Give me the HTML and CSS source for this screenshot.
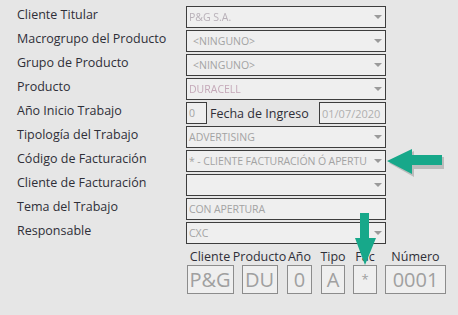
FILE: index.html
```html
<!DOCTYPE html>
<html lang="es">
<head>
  <meta charset="UTF-8">
  <title>Datos del Trabajo</title>
  <link rel="stylesheet" href="styles.css">
</head>
<body>

  <div class="form">
    <!-- Main fields -->
    <div class="form-grid">
      <div class="lbl">Cliente Titular</div>
      <div class="field"><span class="val blur">P&amp;G S.A.</span><i class="caret"></i></div>

      <div class="lbl">Macrogrupo del Producto</div>
      <div class="field"><span class="val pad">&lt;NINGUNO&gt;</span><i class="caret"></i></div>

      <div class="lbl">Grupo de Producto</div>
      <div class="field"><span class="val pad">&lt;NINGUNO&gt;</span><i class="caret"></i></div>

      <div class="lbl">Producto</div>
      <div class="field"><span class="val blur pink">DURACELL</span><i class="caret"></i></div>

      <div class="lbl">Año Inicio Trabajo</div>
      <div class="inline-row">
        <div class="field small"><span class="val">0</span></div>
        <span class="lbl-inline">Fecha de Ingreso</span>
        <div class="field date"><span class="val">01/07/2020</span></div>
      </div>

      <div class="lbl">Tipología del Trabajo</div>
      <div class="field"><span class="val">ADVERTISING</span><i class="caret"></i></div>

      <div class="lbl">Código de Facturación</div>
      <div class="field"><span class="val tight">* - CLIENTE FACTURACIÓN Ó APERTU</span><i class="caret"></i></div>

      <div class="lbl">Cliente de Facturación</div>
      <div class="field"><span class="val"></span><i class="caret"></i></div>

      <div class="lbl">Tema del Trabajo</div>
      <div class="field"><span class="val tight">CON APERTURA</span></div>

      <div class="lbl">Responsable</div>
      <div class="field"><span class="val">CXC</span><i class="caret"></i></div>
    </div>

    <!-- Code parts -->
    <div class="code-grid">
      <div class="code-col"><span class="code-lbl">Cliente</span><div class="code-box w47">P&amp;G</div></div>
      <div class="code-col"><span class="code-lbl">Producto</span><div class="code-box w36">DU</div></div>
      <div class="code-col"><span class="code-lbl">Año</span><div class="code-box w25">0</div></div>
      <div class="code-col"><span class="code-lbl">Tipo</span><div class="code-box w24">A</div></div>
      <div class="code-col"><span class="code-lbl">Fac</span><div class="code-box w24 star">*</div></div>
      <div class="code-col"><span class="code-lbl">Número</span><div class="code-box w61">0001</div></div>
    </div>
  </div>

  <!-- Annotation arrows -->
  <svg class="arrow arrow-left" width="64" height="30" viewBox="0 0 64 30">
    <polygon points="3,14 28,2 28,8 58,8 58,20 28,20 28,28" fill="#8a8a8a" opacity="0.45"/>
    <polygon points="1,12 26,0 26,6 56,6 56,16 26,16 26,25" fill="#17a88a"/>
  </svg>
  <svg class="arrow arrow-down" width="24" height="56" viewBox="0 0 24 56">
    <polygon points="6,2 15,2 15,27 22,27 11,54 1,27 6,27" fill="#17a88a"/>
  </svg>

</body>
</html>
```

FILE: styles.css
```css
/* Reset */
* {
  margin: 0;
  padding: 0;
  box-sizing: border-box;
}

body {
  width: 458px;
  height: 315px;
  overflow: hidden;
  position: relative;
  background-color: #e6e6e6;
  color: #333;
  font-family: "Open Sans", "Noto Sans", sans-serif;
}

/* Form layout */
.form {
  padding: 6px 0 0 17px;
}
.form-grid {
  display: grid;
  grid-template-columns: 169px 200px;
  grid-auto-rows: 22px;
  row-gap: 2px;
}
.lbl {
  font-size: 12.5px;
  line-height: 18px;
  color: #2f2f38;
  white-space: nowrap;
}

/* Fields */
.field {
  display: flex;
  align-items: center;
  height: 22px;
  border: 1px solid #3d3d3d;
  background-color: #efefef;
  padding: 0 3px 0 2px;
  overflow: hidden;
}
.val {
  flex: 1;
  font-size: 10.5px;
  color: #a3a3a3;
  white-space: nowrap;
}
.val.pad {
  padding-left: 4px;
}
.val.tight {
  letter-spacing: -0.1px;
}
.val.blur {
  color: #b8b0b8;
  filter: blur(0.6px);
}
.val.pink {
  color: #c4a8b8;
}
.caret {
  flex: none;
  width: 0;
  height: 0;
  margin-left: 4px;
  border-left: 4px solid transparent;
  border-right: 4px solid transparent;
  border-top: 4px solid #9a9a9a;
}

/* Año / Fecha row */
.inline-row {
  display: flex;
  align-items: center;
}
.field.small {
  width: 21px;
}
.lbl-inline {
  font-size: 12.5px;
  color: #2f2f38;
  margin-left: 3px;
  width: 109px;
  white-space: nowrap;
}
.field.date {
  width: 67px;
}
.field.date .val {
  font-size: 11px;
  color: #b0b0b0;
}

/* Code parts */
.code-grid {
  display: grid;
  grid-template-columns: 48px 51px 29px 38px 26px 75px;
  margin: 5px 0 0 169px;
}
.code-col {
  display: flex;
  flex-direction: column;
  align-items: center;
}
.code-lbl {
  font-size: 12.5px;
  line-height: 16px;
  color: #2f2f38;
  white-space: nowrap;
}
.code-box {
  height: 29px;
  border: 1px solid #8c8c8c;
  background-color: #efefef;
  color: #a0a0a0;
  font-size: 20px;
  line-height: 27px;
  text-align: center;
}
.code-box.star {
  font-size: 13px;
}
.w47 { width: 47px; }
.w36 { width: 36px; }
.w25 { width: 25px; }
.w24 { width: 24px; }
.w61 { width: 61px; }

/* Annotation arrows (drawn over the form) */
.arrow {
  position: absolute;
}
.arrow-left {
  left: 386px;
  top: 149px;
}
.arrow-down {
  left: 354px;
  top: 211px;
}
```
